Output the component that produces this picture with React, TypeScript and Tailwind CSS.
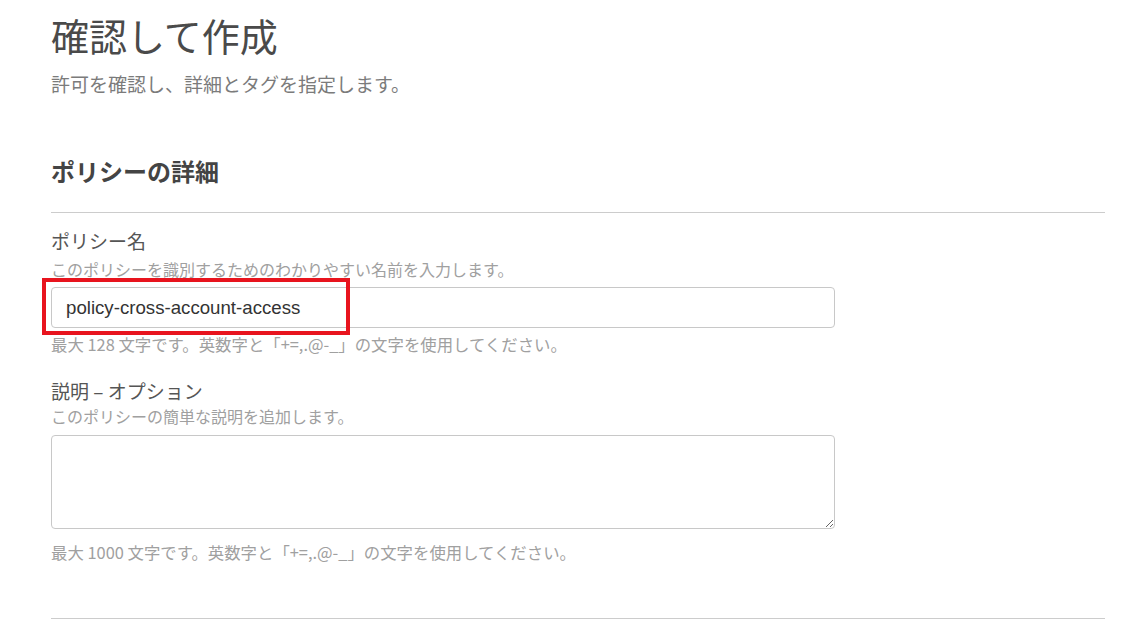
import React, { useState } from 'react';

const jp = '[font-family:"Noto_Sans_CJK_JP","Noto_Sans",sans-serif]';

const App = () => {
  const [name, setName] = useState('policy-cross-account-access');
  const [description, setDescription] = useState('');

  return (
    <div className={`min-h-screen bg-white pl-[51px] pr-[42px] ${jp}`}>
      <h1 className="pt-[13px] text-[38px] leading-[44px] font-normal text-[#4a4a4a]">確認して作成</h1>
      <p className="mt-[14px] text-[19px] leading-[26px] text-[#7b7b7b]">
        許可を確認し、詳細とタグを指定します。
      </p>

      <h2 className="mt-[58px] text-[24px] leading-[32px] font-bold text-[#444]">ポリシーの詳細</h2>
      <div className="mt-[25px] h-px bg-[#cccccc]" />

      {/* Policy name */}
      <div className="mt-[15px]">
        <label className="block text-[19px] leading-[26px] text-[#555]">ポリシー名</label>
        <p className="mt-[4px] text-[16px] leading-[22px] text-[#a0a0a0]">
          このポリシーを識別するためのわかりやすい名前を入力します。
        </p>
        <div className="relative mt-[7px] w-[784px]">
          <input
            type="text"
            value={name}
            onChange={(e) => setName(e.target.value)}
            className="block h-[41px] w-full rounded-[4px] border border-[#c8c8c8] bg-white pl-[14px] text-[18.67px] text-[#333] outline-none [font-family:'Liberation_Sans',Arial,sans-serif]"
          />
          {/* annotation box */}
          <div className="pointer-events-none absolute left-[-9px] top-[-9px] h-[57px] w-[308px] border-[4px] border-[#e8141e]" />
        </div>
        <p className="mt-[5px] text-[16.4px] leading-[22px] text-[#a0a0a0]">
          最大 128 文字です。英数字と「+=,.@-_」の文字を使用してください。
        </p>
      </div>

      {/* Description */}
      <div className="mt-[23px]">
        <label className="block text-[19px] leading-[26px] text-[#555]">説明 – オプション</label>
        <p className="mt-[1px] text-[16px] leading-[22px] text-[#a0a0a0]">
          このポリシーの簡単な説明を追加します。
        </p>
        <textarea
          value={description}
          onChange={(e) => setDescription(e.target.value)}
          className="mt-[8px] block h-[94px] w-[784px] rounded-[4px] border border-[#c8c8c8] bg-white px-[13px] py-[8px] text-[18.67px] text-[#333] outline-none"
        />
        <p className="mt-[12px] text-[16.4px] leading-[22px] text-[#a0a0a0]">
          最大 1000 文字です。英数字と「+=,.@-_」の文字を使用してください。
        </p>
      </div>

      <div className="mt-[55px] h-px bg-[#cccccc]" />
    </div>
  );
};

export default App;
